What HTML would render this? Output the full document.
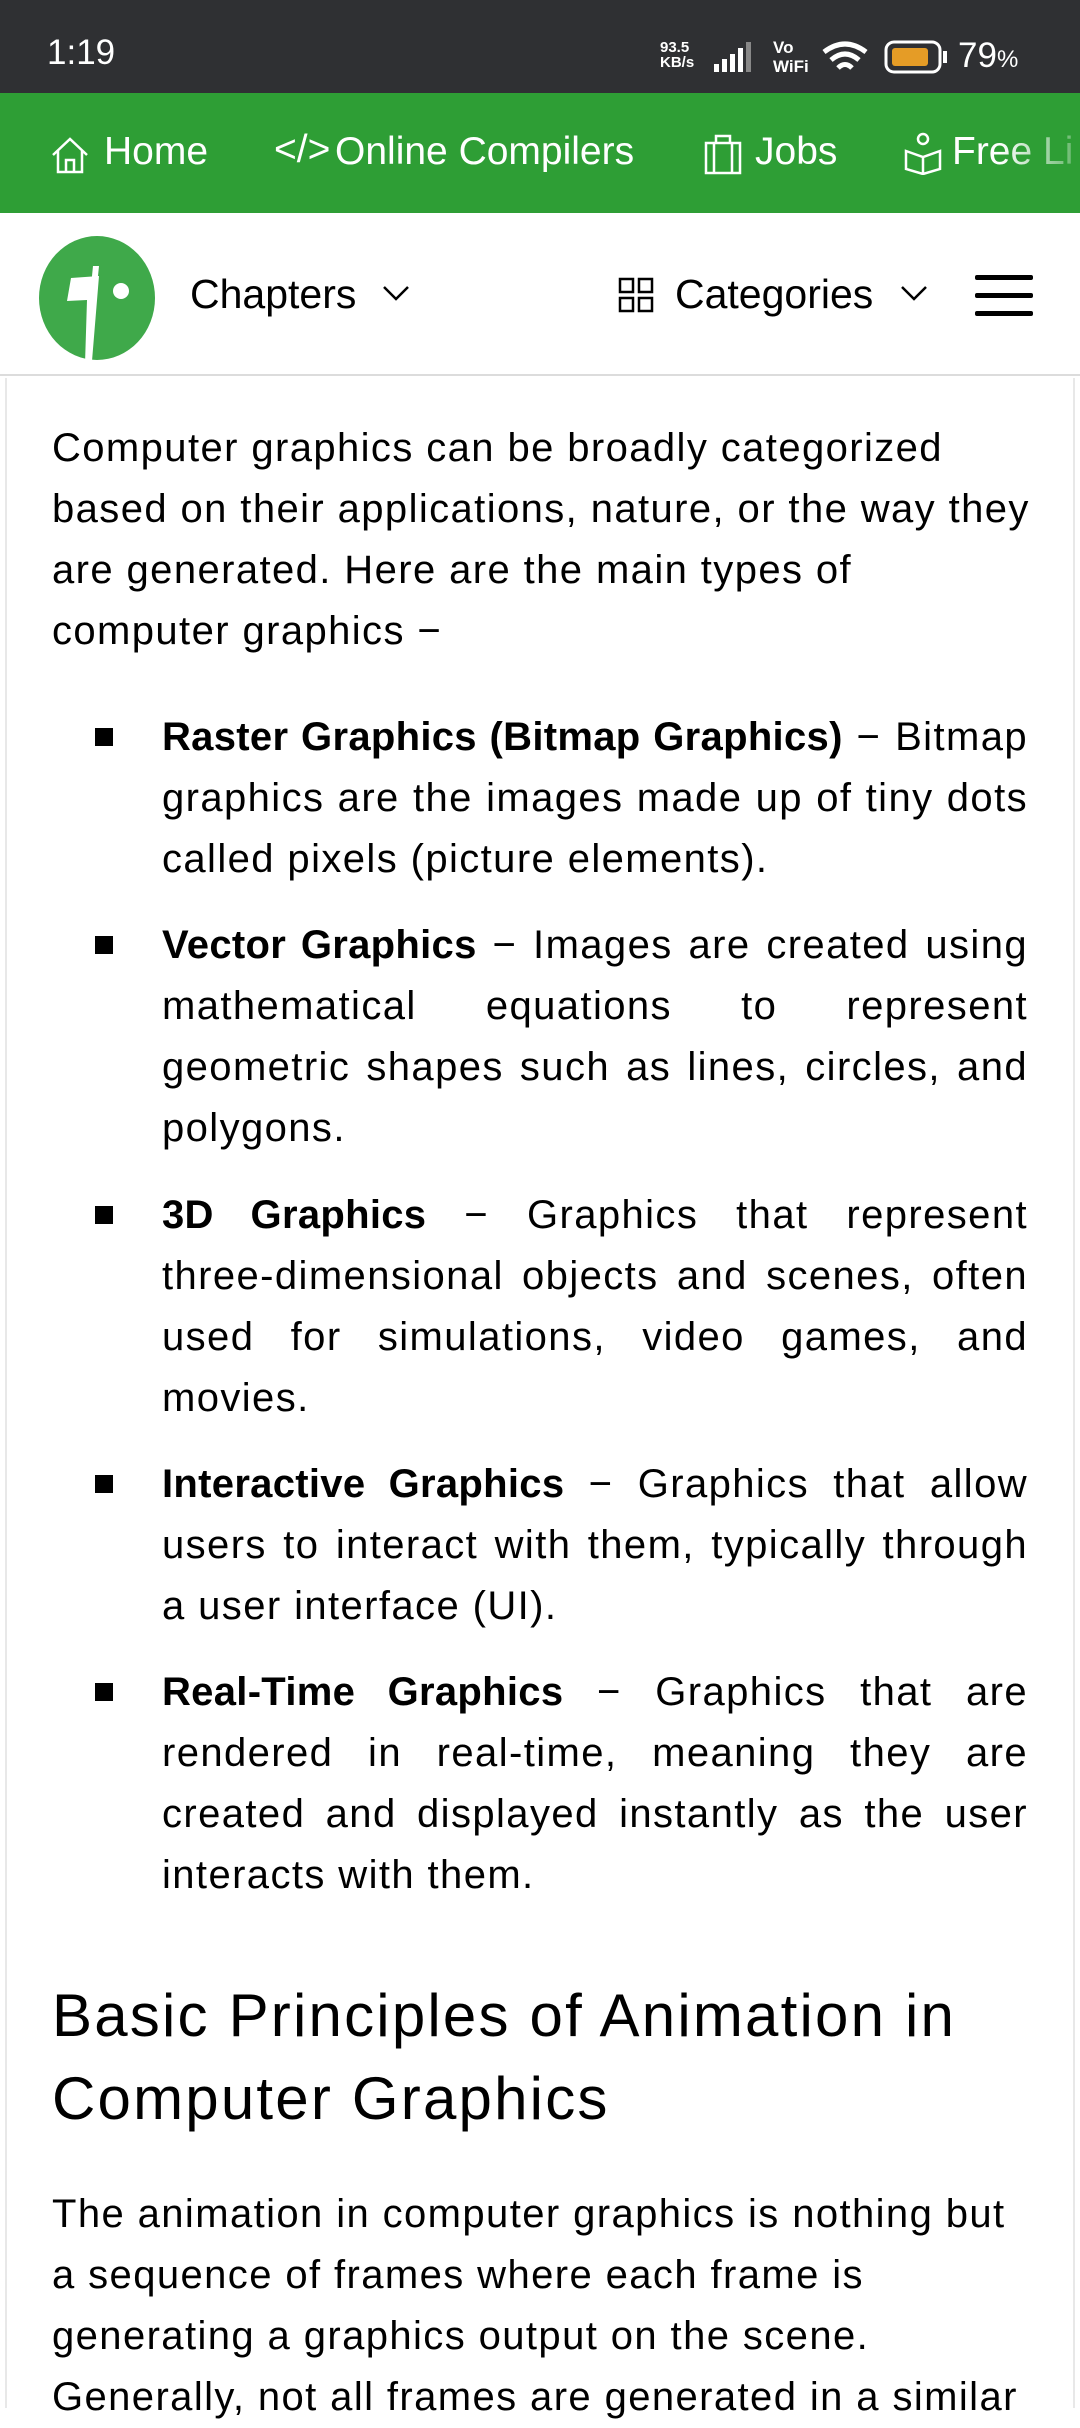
<!DOCTYPE html>
<html><head><meta charset="utf-8"><style>
*{margin:0;padding:0;box-sizing:border-box}
body{width:1080px;height:2400px;overflow:hidden;background:#fff;font-family:"Liberation Sans",sans-serif;color:#000;position:relative}
.abs{position:absolute}
#sb{left:0;top:0;width:1080px;height:93px;background:#2f3033;color:#fff}
#nav{left:0;top:93px;width:1080px;height:120px;background:#2e9e35;color:#fff;font-size:39px;overflow:hidden}
#hdr{left:0;top:213px;width:1080px;height:163px;background:#fff;border-bottom:2px solid #dcdcdc}
#card{left:5px;top:378px;width:1070px;height:2030px;border-left:2px solid #e8e8e8;border-right:2px solid #e8e8e8}
.ln{position:absolute;left:52px;width:976px;height:61px;line-height:61px;font-size:40px;letter-spacing:1.4px;white-space:nowrap}
.ln b{letter-spacing:0.3px}
.li{left:162px;width:866px}
.j{text-align:justify;text-align-last:justify}
.b{position:absolute;left:95px;width:18px;height:18px;background:#000}
h2{position:absolute;left:52px;top:1974px;font-size:60px;letter-spacing:2.2px;font-weight:normal;line-height:83px;white-space:nowrap}
</style></head><body>
<div id="sb" class="abs">
 <div class="abs" style="left:47px;top:33px;font-size:35px">1:19</div>
 <div class="abs" style="left:660px;top:40px;font-size:15px;font-weight:bold;line-height:15px">93.5<br>KB/s</div>
 <svg class="abs" style="left:714px;top:42px" width="50" height="32"><rect x="0" y="22" width="5" height="8" fill="#fff"/><rect x="8" y="17" width="5" height="13" fill="#fff"/><rect x="16" y="12" width="5" height="18" fill="#fff"/><rect x="24" y="6" width="5" height="24" fill="#fff"/><rect x="32" y="0" width="5" height="30" fill="#888"/></svg>
 <div class="abs" style="left:773px;top:38px;font-size:17px;font-weight:bold;line-height:19px">Vo<br>WiFi</div>
 <svg class="abs" style="left:822px;top:40px" width="46" height="36" viewBox="0 0 46 36"><path d="M2 12 Q23 -4 44 12" stroke="#fff" stroke-width="5" fill="none"/><path d="M9 20 Q23 8 37 20" stroke="#fff" stroke-width="5" fill="none"/><path d="M16 28 Q23 21 30 28" stroke="#fff" stroke-width="5" fill="none"/></svg>
 <svg class="abs" style="left:884px;top:40px" width="66" height="34"><rect x="2" y="2" width="54" height="30" rx="8" fill="none" stroke="#fff" stroke-width="3"/><rect x="8" y="8" width="36" height="18" rx="3" fill="#e59c26"/><rect x="59" y="11" width="4" height="12" fill="#fff"/></svg>
 <div class="abs" style="left:958px;top:36px;font-size:35px">79<span style="font-size:24px">%</span></div>
</div>
<div id="nav" class="abs">
 <svg class="abs" style="left:50px;top:42px" width="40" height="40" viewBox="0 0 40 40" fill="none" stroke="#fff" stroke-width="2.5"><path d="M3 20 L20 4 L37 20 M8 16 V37 H32 V16 M16 37 V25 H24 V37"/></svg>
 <div class="abs" style="left:104px;top:37px">Home</div>
 <div class="abs" style="left:274px;top:35px">&lt;/&gt;</div>
 <div class="abs" style="left:335px;top:37px">Online Compilers</div>
 <svg class="abs" style="left:703px;top:40px" width="40" height="42" viewBox="0 0 40 42" fill="none" stroke="#fff" stroke-width="2.5"><rect x="3" y="10" width="34" height="30"/><path d="M13 10 V3 H27 V10 M11 10 V40 M29 10 V40"/></svg>
 <div class="abs" style="left:755px;top:37px">Jobs</div>
 <svg class="abs" style="left:903px;top:38px" width="40" height="44" viewBox="0 0 40 44" fill="none" stroke="#fff" stroke-width="2.5"><circle cx="20" cy="8" r="5"/><path d="M3 20 L20 26 L37 20 V38 L20 43 L3 38 Z M20 26 V43"/></svg>
 <div class="abs" style="left:952px;top:37px;background:linear-gradient(90deg,#fff 40%,rgba(255,255,255,0.3));-webkit-background-clip:text;color:transparent">Free Li</div>
</div>
<div id="hdr" class="abs">
 <svg class="abs" style="left:37px;top:23px" width="120" height="130" viewBox="0 0 120 130"><ellipse cx="60" cy="62" rx="58" ry="62" fill="#3fa94a"/><path d="M34 42 L62 40 L55 125 L48 128 L50 64 L30 65 Z" fill="#fff"/><path d="M56 30 L62 30 L60 50 L54 50Z" fill="#fff"/><circle cx="84" cy="55" r="8" fill="#fff"/></svg>
 <div class="abs" style="left:190px;top:58px;font-size:41px">Chapters</div>
 <svg class="abs" style="left:382px;top:70px" width="28" height="20"><path d="M2 4 L14 16 L26 4" stroke="#000" stroke-width="2.5" fill="none"/></svg>
 <svg class="abs" style="left:618px;top:64px" width="36" height="36" fill="none" stroke="#000" stroke-width="2.5"><rect x="2" y="2" width="13" height="13"/><rect x="21" y="2" width="13" height="13"/><rect x="2" y="21" width="13" height="13"/><rect x="21" y="21" width="13" height="13"/></svg>
 <div class="abs" style="left:675px;top:58px;font-size:41px">Categories</div>
 <svg class="abs" style="left:900px;top:70px" width="28" height="20"><path d="M2 4 L14 16 L26 4" stroke="#000" stroke-width="2.5" fill="none"/></svg>
 <div class="abs" style="left:975px;top:62px;width:58px;height:5px;background:#000;border-radius:2px"></div>
 <div class="abs" style="left:975px;top:80px;width:58px;height:5px;background:#000;border-radius:2px"></div>
 <div class="abs" style="left:975px;top:98px;width:58px;height:5px;background:#000;border-radius:2px"></div>
</div>
<div id="card" class="abs"></div>

<div class="ln" style="top:418px">Computer graphics can be broadly categorized</div>
<div class="ln" style="top:479px">based on their applications, nature, or the way they</div>
<div class="ln" style="top:540px">are generated. Here are the main types of</div>
<div class="ln" style="top:601px">computer graphics −</div>

<div class="b" style="top:728px"></div>
<div class="ln li j" style="top:707px"><b>Raster Graphics (Bitmap Graphics)</b> − Bitmap</div>
<div class="ln li j" style="top:768px">graphics are the images made up of tiny dots</div>
<div class="ln li" style="top:829px">called pixels (picture elements).</div>

<div class="b" style="top:936px"></div>
<div class="ln li j" style="top:915px"><b>Vector Graphics</b> − Images are created using</div>
<div class="ln li j" style="top:976px">mathematical equations to represent</div>
<div class="ln li j" style="top:1037px">geometric shapes such as lines, circles, and</div>
<div class="ln li" style="top:1098px">polygons.</div>

<div class="b" style="top:1206px"></div>
<div class="ln li j" style="top:1185px"><b>3D Graphics</b> − Graphics that represent</div>
<div class="ln li j" style="top:1246px">three-dimensional objects and scenes, often</div>
<div class="ln li j" style="top:1307px">used for simulations, video games, and</div>
<div class="ln li" style="top:1368px">movies.</div>

<div class="b" style="top:1475px"></div>
<div class="ln li j" style="top:1454px"><b>Interactive Graphics</b> − Graphics that allow</div>
<div class="ln li j" style="top:1515px">users to interact with them, typically through</div>
<div class="ln li" style="top:1576px">a user interface (UI).</div>

<div class="b" style="top:1683px"></div>
<div class="ln li j" style="top:1662px"><b>Real-Time Graphics</b> − Graphics that are</div>
<div class="ln li j" style="top:1723px">rendered in real-time, meaning they are</div>
<div class="ln li j" style="top:1784px">created and displayed instantly as the user</div>
<div class="ln li" style="top:1845px">interacts with them.</div>

<h2>Basic Principles of Animation in<br>Computer Graphics</h2>

<div class="ln" style="top:2184px">The animation in computer graphics is nothing but</div>
<div class="ln" style="top:2245px">a sequence of frames where each frame is</div>
<div class="ln" style="top:2306px">generating a graphics output on the scene.</div>
<div class="ln" style="top:2367px">Generally, not all frames are generated in a similar</div>
</body></html>
